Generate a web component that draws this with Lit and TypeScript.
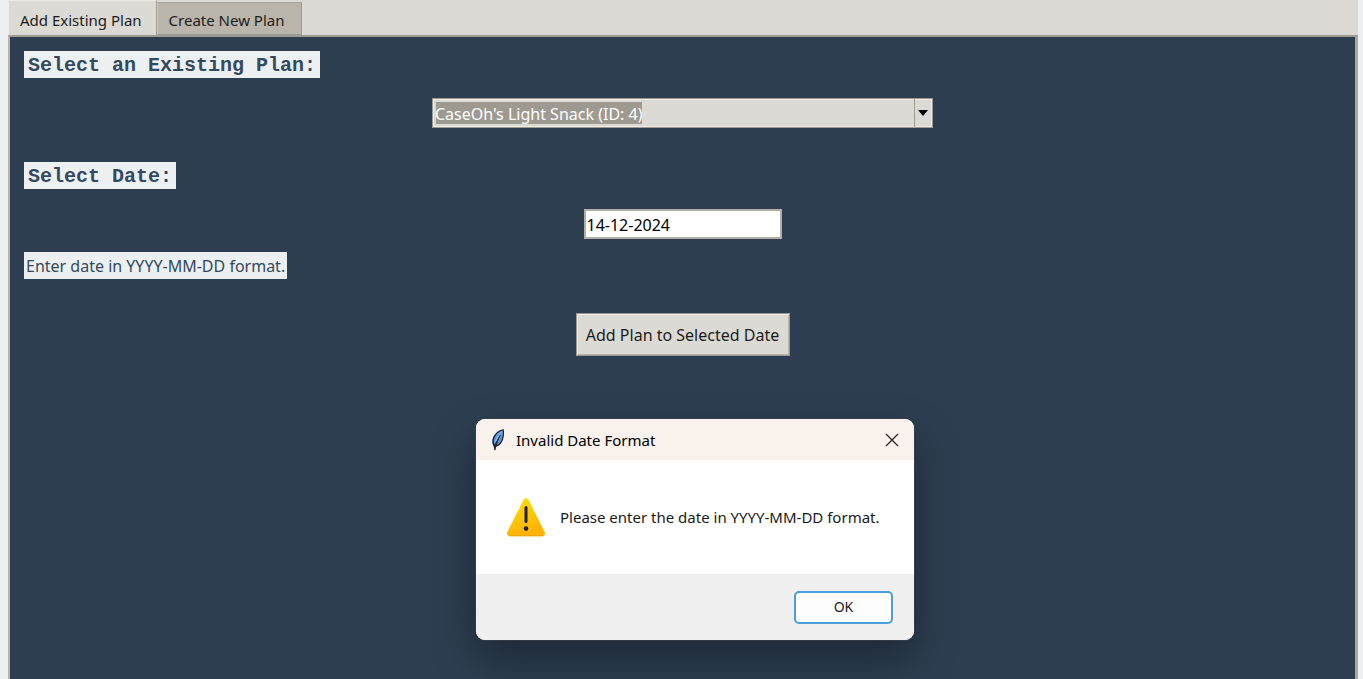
import { LitElement, html, css } from "lit";
import { customElement, state } from "lit/decorators.js";

@customElement("warning-dialog")
class WarningDialog extends LitElement {
  static styles = css`
    .dialog {
      position: absolute;
      inset: auto;
      top: 419px;
      left: 476px;
      width: 438px;
      margin: 0;
      padding: 0;
      border: 0;
      border-radius: 9px;
      overflow: hidden;
      color: #1a1a1a;
      background: #ffffff;
      box-shadow: 0 0 0 1px rgba(60, 66, 74, 0.6), 0 18px 40px rgba(0, 0, 0, 0.35);
      font: 15px/20px "Noto Sans", "Open Sans", sans-serif;
    }
    .title-bar {
      display: flex;
      align-items: center;
      gap: 8px;
      height: 41px;
      padding: 0 14px;
      background: #f9f1eb;
    }
    .feather {
      width: 16px;
      height: 24px;
    }
    .title {
      flex: 1;
      margin: 0;
      padding-left: 2px;
      font: inherit;
      color: #000000;
    }
    .close {
      display: flex;
      padding: 1px;
      border: 0;
      background: none;
    }
    .message {
      display: flex;
      align-items: center;
      gap: 14px;
      height: 114px;
      padding: 0 30px;
      box-sizing: border-box;
    }
    .message p {
      margin: 0;
      white-space: nowrap;
    }
    .actions {
      display: flex;
      justify-content: flex-end;
      padding: 17px 21px 16px;
      background: #f0f0f0;
    }
    .ok {
      width: 99px;
      height: 33px;
      padding: 0 0 1px;
      border: 2px solid #4a9edb;
      border-radius: 5px;
      background: #fdfdfd;
      color: inherit;
      font: inherit;
      font-size: 14px;
    }
  `;

  render() {
    return html`
      <dialog class="dialog" open aria-labelledby="title">
        <header class="title-bar">
          <svg class="feather" viewBox="0 0 16 24" aria-hidden="true">
            <path d="M13.8 1.2C9.4 1.6 5 5 3 9.6C1.8 12.6 2 15.6 3.4 17.8L4.8 22.6L6.2 18.7C9.4 18 12.4 14.6 13.2 11C14 8 14.4 4.4 13.8 1.2Z" fill="#172333" />
            <path d="M12.9 2.2C9 3.2 5.6 6.6 4.3 10.4C3.5 13 3.7 15 4.4 16.7L9.8 7.4L6.4 17.2C9 16.3 11.2 13.8 12.1 10.6C12.8 7.8 13.1 5 12.9 2.2Z" fill="#5e97da" />
            <path d="M11.7 4C8.8 6.5 6.6 10.2 5.4 14" fill="none" stroke="#a9cdf3" stroke-width="0.8" />
            <path d="M10.5 7C8 11 6 16 4.9 22.2" fill="none" stroke="#25292e" stroke-width="1" />
          </svg>
          <h2 class="title" id="title">Invalid Date Format</h2>
          <button class="close" aria-label="Close">
            <svg width="14" height="14" viewBox="0 0 14 14" aria-hidden="true">
              <path d="M1 1L13 13M13 1L1 13" fill="none" stroke="#222222" stroke-width="1.2" />
            </svg>
          </button>
        </header>
        <div class="message">
          <svg width="40" height="40" viewBox="0 0 40 40" aria-hidden="true">
            <defs>
              <linearGradient id="amber" x1="0" y1="0" x2="0.3" y2="1">
                <stop offset="0" stop-color="#ffe100" />
                <stop offset="1" stop-color="#fdb208" />
              </linearGradient>
            </defs>
            <path d="M17.7 2.6Q20 -0.4 22.3 2.6L38.8 35.2Q40 38.8 36.6 39.2H3.4Q0 38.8 1.2 35.2Z" fill="url(#amber)" />
            <path d="M3 38.7H37" stroke="#e9a213" stroke-width="1" />
            <path d="M20 10.4V24.6" stroke="#20211c" stroke-width="3" stroke-linecap="round" />
            <circle cx="20" cy="31.6" r="2.3" fill="#20211c" />
          </svg>
          <p>Please enter the date in YYYY-MM-DD format.</p>
        </div>
        <footer class="actions"><button class="ok">OK</button></footer>
      </dialog>
    `;
  }
}

@customElement("app-root")
class AppRoot extends LitElement {
  @state() private date = "14-12-2024";

  static styles = css`
    :host {
      display: block;
      min-height: 100vh;
      box-sizing: border-box;
      padding: 0 5px 0 8px;
      background: #ecf0f1;
      color: #1c1c1c;
      font: 16px/20px "Noto Sans", "Open Sans", sans-serif;
    }
    .notebook {
      display: flex;
      flex-direction: column;
      min-height: 100vh;
      background: #dcdad5;
    }
    .tabs {
      display: flex;
      align-items: flex-end;
      height: 35px;
    }
    .tab {
      height: 33px;
      padding: 2px 17px 0 11px;
      border: 1px solid #9e9a91;
      border-left-color: #cfcbc2;
      border-top-color: #a8a499;
      background: #bab5ab;
      color: inherit;
      font: inherit;
      font-size: 15px;
    }
    .tab.active {
      height: 35px;
      padding: 3px 14px 0 11px;
      border-color: #eeebe7;
      border-right-color: #9e9a91;
      border-bottom: 0;
      background: #dcdad5;
    }
    .panel {
      flex: 1;
      display: flex;
      flex-direction: column;
      align-items: center;
      padding: 14px;
      border: 2px solid #bab5ab;
      border-top-color: #9e9a91;
      border-right: 3px solid #aba79d;
      border-bottom: 0;
      background: #2c3e50;
    }
    .label {
      align-self: flex-start;
      background: #ecf0f1;
      color: #34495e;
      line-height: 25px;
    }
    .heading {
      padding: 2px 4px 0;
      font-family: "Liberation Mono", monospace;
      font-size: 20px;
      font-weight: bold;
    }
    .hint {
      padding: 2px 2px 0;
    }
    .combo {
      display: grid;
      grid-template-columns: 1fr 20px;
      width: 501px;
      max-width: 100%;
      height: 30px;
      margin: 20px 0 34px;
    }
    .combo select {
      grid-area: 1 / 1 / 2 / 3;
      appearance: none;
      min-width: 0;
      padding: 2px 2px 0;
      border: 1px solid #9e9a91;
      border-radius: 0;
      background: linear-gradient(#9e9a91, #9e9a91) 3px 3px / 206px 22px no-repeat #dcdad5;
      box-shadow: inset 0 0 0 1px #eeebe7;
      color: #ffffff;
      font: inherit;
    }
    .arrow {
      grid-area: 1 / 2;
      z-index: 1;
      display: grid;
      place-items: center;
      margin: 1px;
      padding-right: 2px;
      border-left: 1px solid #9e9a91;
      pointer-events: none;
    }
    .date {
      width: 198px;
      height: 30px;
      box-sizing: border-box;
      margin: 20px 0 13px;
      padding: 1px 1px 0;
      border: 2px solid #b3afa6;
      background: #ffffff;
      color: #000000;
      font: inherit;
      outline: 0;
    }
    .add {
      width: 214px;
      height: 43px;
      margin: 34px 0;
      border: 1px solid #9e9a91;
      background: #dcdad5;
      box-shadow: inset 1px 1px 0 #eeebe7, inset -1px -1px 0 #bab5ab;
      color: #1c1c1c;
      font: inherit;
      padding: 0;
    }
  `;

  render() {
    return html`
      <main class="notebook">
        <div class="tabs" role="tablist">
          <button class="tab active" role="tab" aria-selected="true">Add Existing Plan</button>
          <button class="tab" role="tab" aria-selected="false">Create New Plan</button>
        </div>
        <section class="panel" role="tabpanel">
          <label class="label heading" for="plan">Select an Existing Plan:</label>
          <div class="combo">
            <select id="plan">
              <option>CaseOh's Light Snack (ID: 4)</option>
            </select>
            <span class="arrow" aria-hidden="true">
              <svg width="10" height="6" viewBox="0 0 10 6"><path d="M0 0H10L5 6Z" fill="#000000" /></svg>
            </span>
          </div>
          <label class="label heading" for="date">Select Date:</label>
          <input class="date" id="date" type="text" .value=${this.date} aria-describedby="hint" />
          <span class="label hint" id="hint">Enter date in YYYY-MM-DD format.</span>
          <button class="add">Add Plan to Selected Date</button>
        </section>
      </main>
      <warning-dialog></warning-dialog>
    `;
  }
}
